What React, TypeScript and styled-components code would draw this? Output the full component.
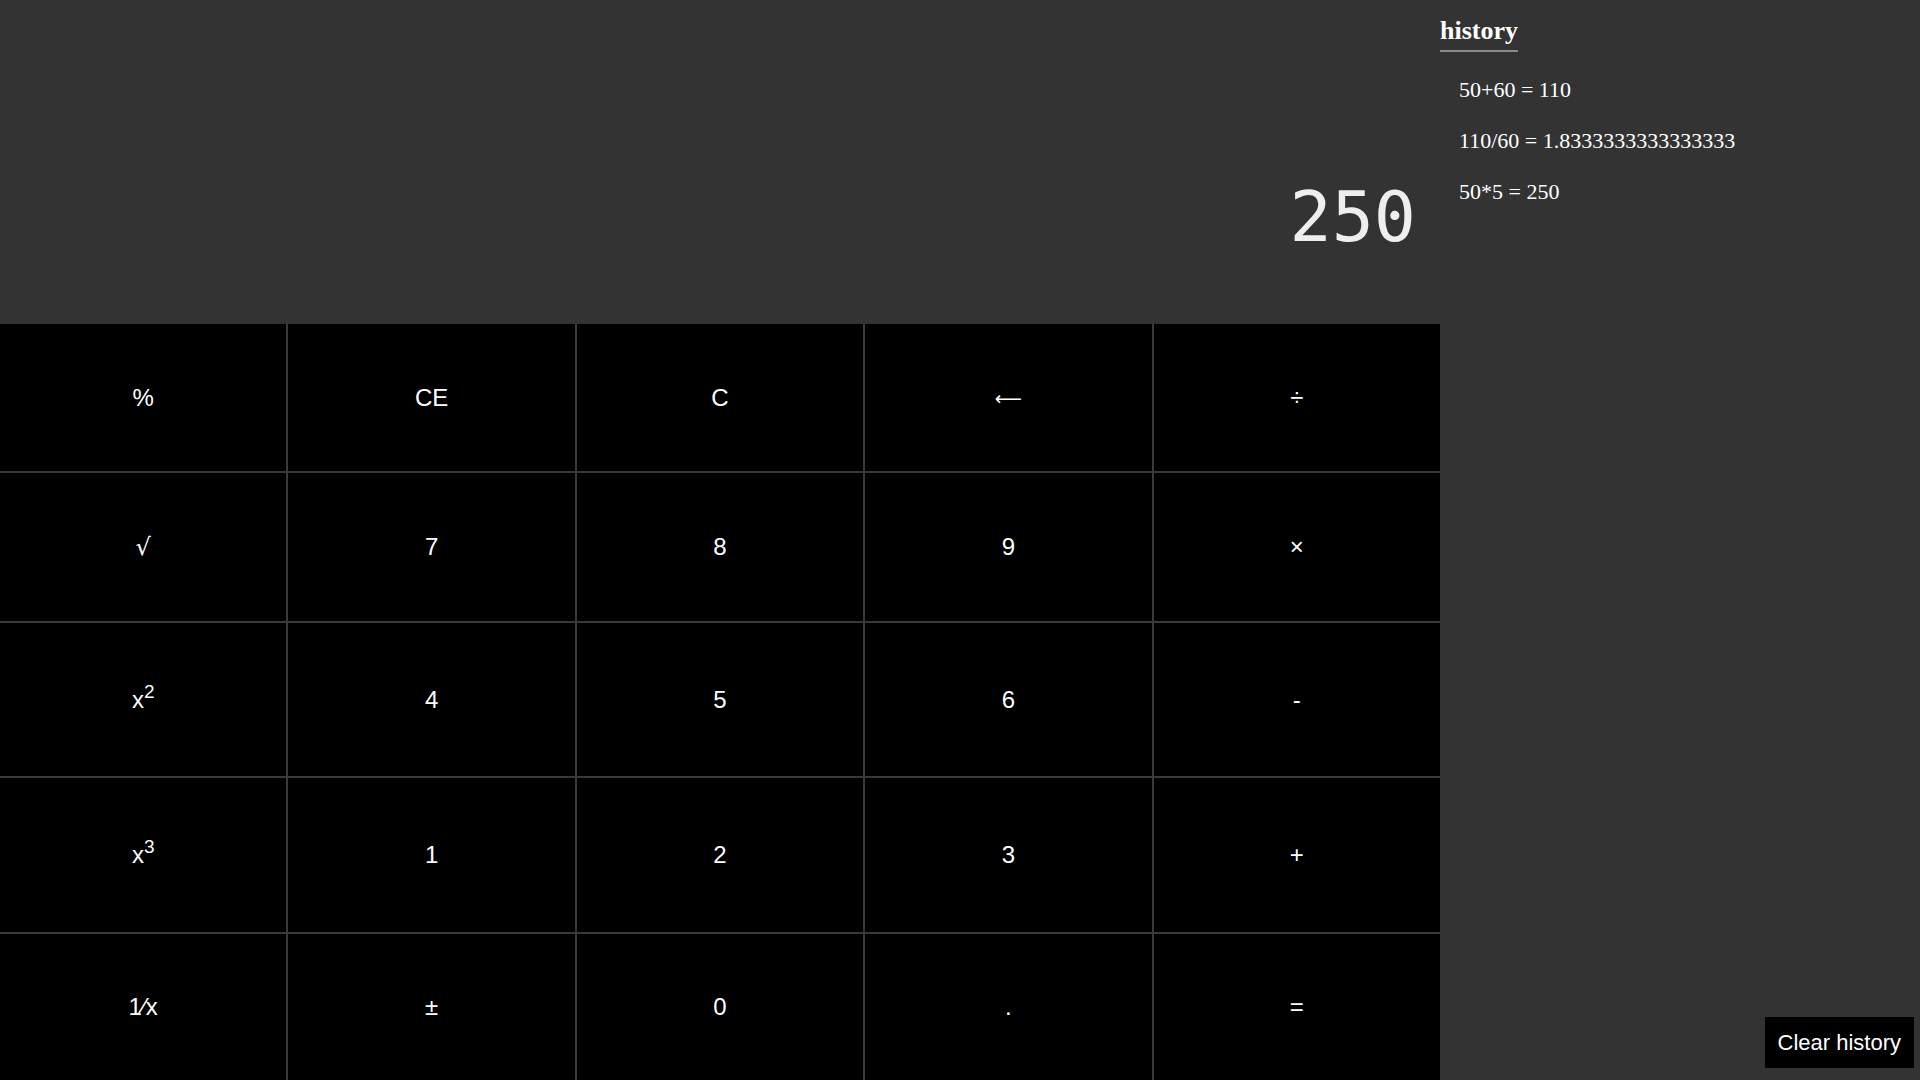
import React from "react";
import styled, { createGlobalStyle } from "styled-components";

const GlobalStyle = createGlobalStyle`
  html, body {
    margin: 0;
    padding: 0;
    background: #333333;
  }
  #root {
    height: 100vh;
  }
`;

const Page = styled.div`
  display: grid;
  grid-template-columns: 1440px 480px;
  width: 1920px;
  height: 1080px;
  background: #333333;
  overflow: hidden;
`;

const Calculator = styled.div`
  display: flex;
  flex-direction: column;
  height: 1080px;
`;

const Display = styled.div`
  height: 324px;
  display: flex;
  align-items: flex-end;
  justify-content: flex-end;
  padding: 0 24px 72px 0;
  box-sizing: border-box;
  font-family: "DejaVu Sans Mono", "Liberation Mono", monospace;
  font-size: 70px;
  line-height: 70px;
  color: #eeeeee;
`;

const Keypad = styled.div`
  display: grid;
  grid-template-columns: repeat(5, 1fr);
  grid-template-rows: 147px 148px 153px 154px 146px;
  gap: 2px;
  background: #3a3a3a;
  flex: 1;
`;

const Key = styled.button`
  border: none;
  margin: 0;
  padding: 0;
  background: #000000;
  color: #ffffff;
  font-family: "Liberation Sans", Arial, sans-serif;
  font-size: 24px;
  display: flex;
  align-items: center;
  justify-content: center;
  cursor: pointer;
`;

const Label = styled.span`
  display: inline-block;
  line-height: 28px;

  sup {
    font-size: 19px;
    line-height: 0;
    vertical-align: 10px;
  }
`;

const Arrow = styled.span`
  font-family: "DejaVu Sans", sans-serif;
  font-size: 19px;
`;

const Radical = styled.span`
  font-family: "DejaVu Serif", serif;
  font-size: 24px;
`;

const HistoryPanel = styled.aside`
  display: flex;
  flex-direction: column;
  align-items: flex-start;
  height: 1080px;
  color: #ffffff;
  font-family: "Liberation Serif", "Times New Roman", serif;
`;

const HistoryTitle = styled.h3`
  display: inline-block;
  margin: 16px 0 0 0;
  padding-bottom: 4px;
  border-bottom: 2px solid #8a8a8a;
  font-size: 26px;
  line-height: 30px;
  font-weight: bold;
`;

const HistoryList = styled.ul`
  list-style: none;
  margin: 25px 0 0 0;
  padding: 0 0 0 19px;
  display: flex;
  flex-direction: column;
  gap: 25px;
`;

const HistoryItem = styled.li`
  font-size: 22px;
  line-height: 26px;
`;

const ClearButton = styled.button`
  margin: auto 6px 12px 0;
  align-self: flex-end;
  height: 51px;
  padding: 0 13px;
  border: none;
  background: #000000;
  color: #ffffff;
  font-family: "Liberation Sans", Arial, sans-serif;
  font-size: 22px;
  cursor: pointer;
`;

const keys: React.ReactNode[] = [
  "%", "CE", "C", <Arrow>⟵</Arrow>, "÷",
  <Radical>√</Radical>, "7", "8", "9", "×",
  <>x<sup>2</sup></>, "4", "5", "6", "-",
  <>x<sup>3</sup></>, "1", "2", "3", "+",
  "1⁄x", "±", "0", ".", "=",
];

const history = [
  "50+60 = 110",
  "110/60 = 1.8333333333333333",
  "50*5 = 250",
];

export default function App() {
  return (
    <>
      <GlobalStyle />
      <Page>
        <Calculator>
          <Display>250</Display>
          <Keypad>
            {keys.map((k, i) => (
              <Key key={i}>
                <Label>{k}</Label>
              </Key>
            ))}
          </Keypad>
        </Calculator>
        <HistoryPanel>
          <HistoryTitle>history</HistoryTitle>
          <HistoryList>
            {history.map((h) => (
              <HistoryItem key={h}>{h}</HistoryItem>
            ))}
          </HistoryList>
          <ClearButton>Clear history</ClearButton>
        </HistoryPanel>
      </Page>
    </>
  );
}
